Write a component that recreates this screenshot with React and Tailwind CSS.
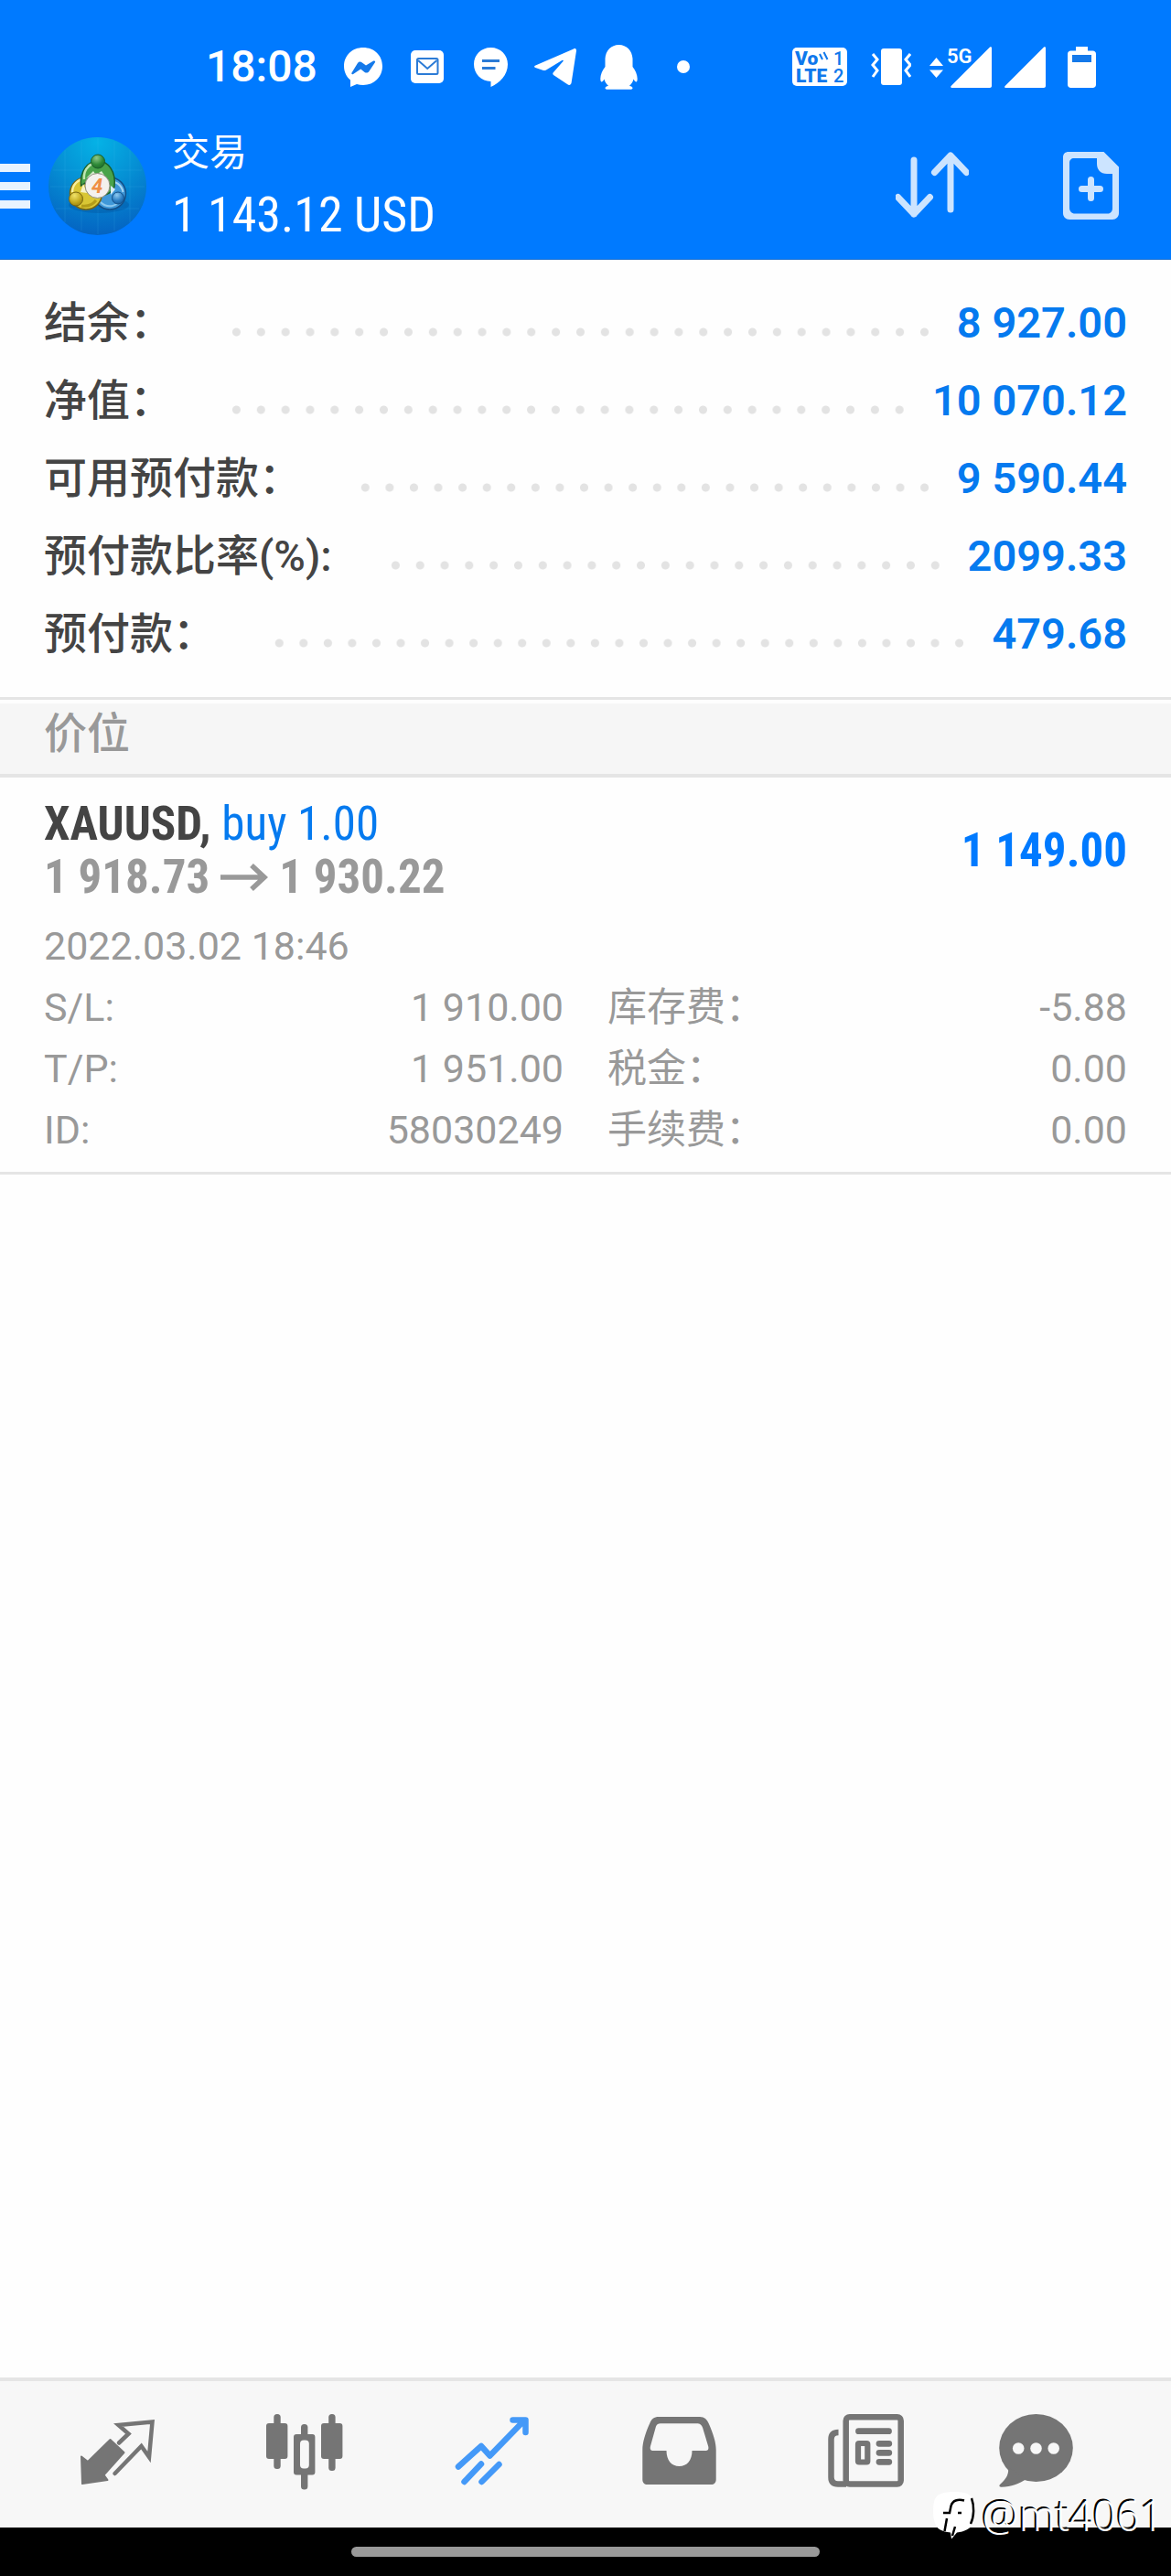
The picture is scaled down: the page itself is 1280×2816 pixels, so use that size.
const SANS = "font-['Roboto','Noto_Sans_CJK_SC',sans-serif]";
const NARROW = "font-['Roboto_Condensed','Roboto',sans-serif]";

const summary = [
  { label: '结余：', value: '8 927.00' },
  { label: '净值：', value: '10 070.12' },
  { label: '可用预付款：', value: '9 590.44' },
  { label: '预付款比率(%):', value: '2099.33' },
  { label: '预付款：', value: '479.68' },
];

const details = [
  { label: 'S/L:', value: '1 910.00' },
  { label: '库存费：', value: '-5.88' },
  { label: 'T/P:', value: '1 951.00' },
  { label: '税金：', value: '0.00' },
  { label: 'ID:', value: '58030249' },
  { label: '手续费：', value: '0.00' },
];

function MessengerIcon() {
  return (
    <svg className="h-[43px] w-[42px]" viewBox="0 0 42 43" aria-hidden="true">
      <path fill="#fff" d="M21 0C9 0 0 8.600 0 20.300c0 6.300 2.600 11.500 7 15.200V43l7-3c2.200.7 4.500 1 7 1 12 0 21-8.900 21-20.700S33 0 21 0Z" />
      <path fill="#1479ea" d="m8.500 27.500 6.300-10.300c1.200-1.800 3.100-2.200 4.700-1l4.500 3.300 8.300-4.900c1.200-.7 2.400.4 1.600 1.600l-6.500 9.700c-1.200 1.800-3.200 2.200-4.800 1l-4.300-3.300-8.200 5.400c-1.200.7-2.300-.4-1.600-1.500Z" />
    </svg>
  );
}

function MailIcon() {
  return (
    <svg className="h-9 w-9" viewBox="0 0 36 36" aria-hidden="true">
      <rect width="36" height="36" rx="5" fill="#fff" />
      <rect x="7" y="9" width="22.500" height="17" rx="1.500" fill="none" stroke="#2b7bd6" strokeWidth="2" />
      <path d="m8 11 10.200 9L28.500 11" fill="none" stroke="#2b7bd6" strokeWidth="2" />
    </svg>
  );
}

function ChatPinIcon() {
  return (
    <svg className="h-[43px] w-[37px]" viewBox="0 0 37 43" aria-hidden="true">
      <path fill="#fff" d="M18.500 0C8 0 0 8 0 18.300 0 28.500 8 37 18.500 37v6C28 39 37 30 37 18.300 37 8 29 0 18.500 0Z" />
      <path d="M9 14.500h19M9 22.500h14.500" stroke="#2b7bd6" strokeWidth="3" />
    </svg>
  );
}

function PlaneIcon() {
  return (
    <svg className="h-10 w-[46px]" viewBox="0 0 46 40" aria-hidden="true">
      <path fill="#fff" d="M1.400 18.400 43 .4c1.800-.8 3.200.2 3 2.200l-5.400 35c-.4 2.200-2.400 3-4.200 1.700L21 29c-1-.8-1-2 0-2.900l10.500-12c.8-1 0-1.900-1.200-1.200L13 23.500c-1.200.7-2.400.8-3.700.3L1.300 21c-1.700-.6-1.600-2 .1-2.600Z" />
    </svg>
  );
}

function PenguinIcon() {
  return (
    <svg className="h-[49px] w-[41px]" viewBox="0 0 41 49" aria-hidden="true">
      <path fill="#fff" d="M20.500 0C12 0 6 6.500 5.500 15v9C2.500 28 .3 32.500.3 37c0 2.500.6 3.500 1.200 3.500.9 0 2-1.200 3-3 .8 3 2.200 5.400 4.500 7.300-2 .6-3.500 1.300-3.500 2.400 0 1.200 1.200 1.600 3.500 1.600h23c2.300 0 3.500-.4 3.500-1.600 0-1.100-1.500-1.800-3.500-2.400 2.300-1.900 3.700-4.300 4.500-7.300 1 1.800 2.100 3 3 3 .6 0 1.200-1 1.200-3.500 0-4.500-2.200-9-5.200-13v-9C35 6.500 29 0 20.500 0Z" />
    </svg>
  );
}

function VolteIcon() {
  return (
    <svg className="h-[42px] w-[60px]" viewBox="0 0 60 42" role="img" aria-label="VoLTE">
      <rect width="60" height="42" rx="5" fill="#fff" />
      <g fill="#0f78ec" className={SANS}>
        <text x="3" y="19" fontSize="21" fontWeight="900">Vo</text>
        <text x="4" y="38" fontSize="21" fontWeight="900">LTE</text>
        <text x="45" y="19" fontSize="20" fontWeight="500">1</text>
        <text x="45" y="38" fontSize="20" fontWeight="500">2</text>
      </g>
      <path d="m30 7 3 6M34.500 5l4 8" stroke="#0f78ec" strokeWidth="2" />
    </svg>
  );
}

function VibrateIcon() {
  return (
    <svg className="h-10 w-11" viewBox="0 0 44 40" aria-hidden="true">
      <rect x="11" width="23" height="40" rx="3" fill="#fff" />
      <path d="m2 6 5 6-5 6 5 6-5 7M43 6l-5 6 5 6-5 6 5 7" fill="none" stroke="#fff" strokeWidth="3" />
    </svg>
  );
}

function SignalIcon() {
  return (
    <svg className="h-[45px] w-[45px]" viewBox="0 0 45 45" aria-hidden="true">
      <path fill="#fff" d="M43 .6c.8-.8 2-.4 2 .8V43c0 1.200-.8 2-2 2H1.500C.2 45-.3 43.800.6 43Z" />
    </svg>
  );
}

function Signal5GIcon() {
  return (
    <svg className="h-[45px] w-[68px] overflow-visible" viewBox="0 0 68 45" role="img" aria-label="5G">
      <path fill="#fff" d="m0 21 7.500-9L15 21ZM0 25.500h15L7.500 34ZM66 .6c.8-.8 2-.4 2 .8V43c0 1.200-.8 2-2 2H24.500c-1.300 0-1.800-1.200-.9-2Z" />
      <text x="19" y="18" fontSize="22" fontWeight="600" fill="#fff" className={SANS}>5G</text>
    </svg>
  );
}

function BatteryIcon() {
  return (
    <svg className="h-[45px] w-[31px]" viewBox="0 0 31 45" aria-hidden="true">
      <path fill="#fff" d="M9 0h13v4.500h5.500c2 0 3.500 1.500 3.500 3.500v33.500c0 2-1.500 3.500-3.500 3.500h-24C1.500 45 0 43.500 0 41.500V8c0-2 1.500-3.500 3.500-3.500H9Z" />
      <path fill="#1479ea" d="M5 9h21v8H5Z" />
    </svg>
  );
}

function Logo() {
  return (
    <svg className="h-[107px] w-[107px] shrink-0" viewBox="0 0 107 107" role="img" aria-label="MetaTrader 4">
      <defs>
        <radialGradient id="sky" cx="0.5" cy="0.05" r="1">
          <stop offset="0" stopColor="#05b2e6" />
          <stop offset="0.45" stopColor="#0590d4" />
          <stop offset="1" stopColor="#045fc0" />
        </radialGradient>
        <radialGradient id="green" cx="0.4" cy="0.25" r="0.8">
          <stop offset="0" stopColor="#8fc88a" />
          <stop offset="0.6" stopColor="#2f8a38" />
          <stop offset="1" stopColor="#1c6a28" />
        </radialGradient>
        <radialGradient id="gold" cx="0.4" cy="0.25" r="0.8">
          <stop offset="0" stopColor="#f0e26a" />
          <stop offset="0.6" stopColor="#c4ac20" />
          <stop offset="1" stopColor="#9b820f" />
        </radialGradient>
        <radialGradient id="blue" cx="0.4" cy="0.25" r="0.8">
          <stop offset="0" stopColor="#8fcaf0" />
          <stop offset="0.6" stopColor="#2c7fc4" />
          <stop offset="1" stopColor="#145a9c" />
        </radialGradient>
      </defs>
      <circle cx="53.500" cy="53.500" r="53.500" fill="url(#sky)" />
      <path d="M18 14v79M36 5v97M54 1v105M72 5v97M89 14v79M5 36h97M2 54h103M8 78h91" stroke="#4cc3ee" strokeOpacity="0.16" />
      <ellipse cx="55" cy="74" rx="33" ry="9" fill="#034a92" opacity="0.3" />
      <g strokeWidth="1.500">
        <circle cx="67" cy="61.500" r="17.500" fill="#3f98d8" stroke="#134f88" />
        <path d="M57 71c8 8 20 4 23-5" fill="none" stroke="#8cc8ee" strokeWidth="2" />
        <path d="M64 48c9-1 16 4 17.500 12" fill="none" stroke="#a5d6f3" strokeWidth="2" />
        <circle cx="41" cy="61.500" r="17.500" fill="#d9c634" stroke="#796611" />
        <path d="M26 60c0-8 6-14 13-14" fill="none" stroke="#f8ef9c" strokeWidth="2.500" />
        <path d="M36 75c6 1 12-1 16-6" fill="none" stroke="#b39c18" strokeWidth="3" />
        <path d="M35.500 53C34 37 43 26 54 26s20 11 18 28c-2 5-6 8-10 9L54 45 42 49Z" fill="#49a34a" stroke="#1b5f2a" />
        <path d="M39 46c-1-9 4-15 9-17" fill="none" stroke="#bfe6b2" strokeWidth="2.500" />
        <path d="M49 37l-8 8 10-5ZM58 37l4 6-7-4Z" fill="#d9f0d2" />
        <path d="M35 60l3-9 4 10Z" fill="#f6f2c4" />
        <path d="M73 57l-5-4v10Z" fill="#d7ecf8" />
      </g>
      <circle cx="54" cy="26.500" r="7.500" fill="url(#green)" stroke="#1b5f2a" />
      <circle cx="30" cy="67.500" r="7.500" fill="url(#gold)" stroke="#796611" />
      <circle cx="76" cy="66.500" r="6.500" fill="url(#blue)" stroke="#134f88" />
      <circle cx="53.500" cy="53" r="13.500" fill="#f4f1ee" stroke="#8f8f80" strokeWidth="1" />
      <text x="53" y="60.500" textAnchor="middle" fontSize="22" fontStyle="italic" fontWeight="700" fill="#ef8f45" className={SANS}>4</text>
    </svg>
  );
}

function SortIcon() {
  return (
    <svg className="h-[76px] w-20" viewBox="0 0 80 76" aria-hidden="true">
      <path d="M20 10v59M2.500 50.500 20 69l17.500-18.500M60 64V5M42.500 23.500 60 5l17.500 18.500" fill="none" stroke="#cce4ff" strokeWidth="7" strokeLinecap="round" strokeLinejoin="round" />
    </svg>
  );
}

function NewFileIcon() {
  return (
    <svg className="h-[74px] w-[61px]" viewBox="0 0 61 74" aria-hidden="true">
      <path fill="#cce4ff" fillRule="evenodd" d="M6 0h38.500L61 16.500V67c0 4-3 7-7 7H7c-4 0-7-3-7-7V6c0-4 2.500-6 6-6Zm6 7c-3 0-5 2-5 5v49c0 4 2.500 6.500 6 6.500h36c3 0 5-2.500 5-6V24h-6c-7 0-11-4.500-11-11V7Z" />
      <path d="M30.500 30.500v20M20.500 40.500h20" stroke="#cce4ff" strokeWidth="7" strokeLinecap="round" />
    </svg>
  );
}

function QuotesIcon() {
  return (
    <svg className="h-24 w-24" viewBox="0 0 96 96" aria-hidden="true">
      <path fill="#757575" stroke="#757575" strokeWidth="2" strokeLinejoin="round" d="M9 54.500 16 60 40.500 36 55.500 50 33.500 74.500 37.500 80 10 84Z" />
      <path d="m50 39.500 10.500-10L49.500 20l37-3.500L83 55l-8.500-12L45.500 73" fill="none" stroke="#757575" strokeWidth="4.500" strokeLinecap="round" />
    </svg>
  );
}

function CandlesIcon() {
  return (
    <svg className="h-24 w-24" viewBox="0 0 96 96" aria-hidden="true">
      <g fill="#757575">
        <rect x="14.300" y="8" width="7.400" height="60" rx="3.500" />
        <rect x="6" y="18" width="23.400" height="39" rx="3" />
        <rect x="44" y="19" width="7.400" height="71.500" rx="3.500" />
        <rect x="36" y="30" width="23.400" height="44.500" rx="3" />
        <rect x="74.200" y="8" width="7.400" height="62" rx="3.500" />
        <rect x="66" y="18" width="23.400" height="39" rx="3" />
      </g>
      <rect x="43" y="36.500" width="9.800" height="31" rx="4" fill="#f7f7f7" />
    </svg>
  );
}

function TradeIcon() {
  return (
    <svg className="h-24 w-24" viewBox="0 0 96 96" aria-hidden="true">
      <path d="M11 65.500 36 43l9.500 10.500L82 16M70.500 14.500h14V28M17.500 82 36 62.500M36.500 82 55.500 63" fill="none" stroke="#4499f8" strokeWidth="6.500" strokeLinecap="round" strokeLinejoin="round" />
    </svg>
  );
}

function InboxIcon() {
  return (
    <svg className="h-24 w-24" viewBox="0 0 96 96" aria-hidden="true">
      <path fill="#757575" fillRule="evenodd" d="M26 11h45c5 0 8 3 9.800 7.500 4.800 11 7.900 20.500 7.900 28.500v32.500c0 3.500-2 5.500-5.500 5.500H13.800c-3.500 0-5.500-2-5.500-5.500V47c0-8 3-18 8-29C18 13.500 21 11 26 11Zm2 7.300c-2.500 0-4 1-5 3.200L17 43c-.8 3 0 5 2.500 5h15c0 10.500 5.500 17 14 17s14-6.500 14-17h15c2.500 0 3.500-2 2.600-5l-6-20c-1-3-3-4.700-6-4.700Z" />
    </svg>
  );
}

function NewsIcon() {
  return (
    <svg className="h-24 w-24" viewBox="0 0 96 96" aria-hidden="true">
      <rect x="25.700" y="11.200" width="60" height="73.300" rx="4" fill="none" stroke="#757575" strokeWidth="6.500" />
      <path d="M17.500 28c-5.500 0-8 2.500-8 7.500v41.500c0 5 2.500 7.500 7.500 7.500h9" fill="none" stroke="#757575" strokeWidth="6.500" />
      <path d="M39.500 26.700h33M62 40.300h10.800M62 50.300h10.800M62 60.300h10.800" stroke="#757575" strokeWidth="6.800" strokeLinecap="round" />
      <rect x="39" y="40" width="10.300" height="20.500" rx="1" fill="none" stroke="#757575" strokeWidth="6.200" />
    </svg>
  );
}

function MessagesIcon() {
  return (
    <svg className="h-24 w-24" viewBox="0 0 96 96" aria-hidden="true">
      <ellipse cx="48.500" cy="45" rx="40.300" ry="37" fill="#757575" />
      <path fill="#757575" d="M18 66c1 7-1.500 12.500-8.500 18.500-2 2-1 3.300 1.500 3.300C21 87.500 30 84 38 79Z" />
      <g fill="#f7f7f7">
        <circle cx="29.200" cy="45.500" r="6.300" />
        <circle cx="48.500" cy="45.500" r="6.300" />
        <circle cx="67.700" cy="45.500" r="6.300" />
      </g>
    </svg>
  );
}

const tabs = [
  { label: '行情', Icon: QuotesIcon },
  { label: '图表', Icon: CandlesIcon },
  { label: '交易', Icon: TradeIcon, current: true },
  { label: '历史', Icon: InboxIcon },
  { label: '新闻', Icon: NewsIcon },
  { label: '消息', Icon: MessagesIcon, badged: true },
];

function StatusBar() {
  return (
    <div className="flex h-[135px] items-center pt-[11px] pr-[82px] pl-[225px]">
      <span className="mr-[15px] text-[48px] leading-none font-medium">18:08</span>
      <div className="grid auto-cols-[70px] grid-flow-col place-items-center">
        <MessengerIcon />
        <MailIcon />
        <ChatPinIcon />
        <PlaneIcon />
        <PenguinIcon />
        <span className="size-[14px] rounded-full bg-white" />
      </div>
      <div className="ml-auto flex items-center">
        <VolteIcon />
        <span className="ml-[26px]"><VibrateIcon /></span>
        <span className="ml-5"><Signal5GIcon /></span>
        <span className="ml-[14px]"><SignalIcon /></span>
        <span className="ml-6"><BatteryIcon /></span>
      </div>
    </div>
  );
}

export default function App() {
  return (
    <div className={`relative flex min-h-screen flex-col bg-[#fefefe] ${SANS}`}>
      <header className="border-b border-[#1a6fd0] bg-[#007aff] text-white">
        <StatusBar />
        <div className="mb-3 flex h-[136px] items-center pr-[57px]">
          <button type="button" aria-label="菜单" className="flex w-[33px] flex-col gap-[11px]">
            <span className="h-[9px] bg-[#e8f3ff]" />
            <span className="h-[9px] bg-[#e8f3ff]" />
            <span className="h-[9px] bg-[#e8f3ff]" />
          </button>
          <span className="ml-5"><Logo /></span>
          <div className="mt-1 ml-7 whitespace-nowrap">
            <h1 className="text-[41px] leading-[60px]">交易</h1>
            <p className={`text-[54px] leading-[76px] ${NARROW}`}>1 143.12 USD</p>
          </div>
          <button type="button" aria-label="排序" className="ml-auto"><SortIcon /></button>
          <button type="button" aria-label="新订单" className="ml-[103px]"><NewFileIcon /></button>
        </div>
      </header>

      <main className="flex-1">
        <dl className="px-12 pt-[26px] pb-[27px] text-[47px] leading-[85px] font-medium">
          {summary.map((row) => (
            <div key={row.label} className="flex items-center whitespace-nowrap">
              <dt className="text-[#444]">{row.label}</dt>
              <span className="mt-5 mr-[22px] ml-14 h-[10px] flex-1 bg-[radial-gradient(circle,#e3e3e3_4px,transparent_5px)] bg-repeat-round [background-size:27px_10px]" />
              <dd className="font-semibold text-[#057aef]">{row.value}</dd>
            </div>
          ))}
        </dl>

        <div className="border-t-[3px] border-[#e5e5e5] pt-1">
          <h2 className="border-b-4 border-[#e5e5e5] bg-[#f6f6f6] px-12 pb-3 text-[47px] leading-[65px] font-medium text-[#999]">价位</h2>
        </div>

        <section className="border-b-[3px] border-[#e5e5e5] px-12 pt-[22px] pb-3 text-[#999]">
          <div className={`flex items-center justify-between text-[51px] leading-[58px] font-bold whitespace-nowrap ${NARROW}`}>
            <div>
              <h3 className="text-[#444]">
                XAUUSD, <span className="font-normal text-[#057aef]">buy 1.00</span>
              </h3>
              <p className="flex items-center">
                1 918.73
                <svg className="mx-3 h-8 w-[52px]" viewBox="0 0 52 32" role="img" aria-label="至">
                  <path d="M0 16h47M34 3l14 13-14 13" fill="none" stroke="#999" strokeWidth="5.500" />
                </svg>
                1 930.22
              </p>
            </div>
            <p className="text-[#007aff]">1 149.00</p>
          </div>
          <p className="mt-[13px] text-[43px] leading-[67px]">2022.03.02 18:46</p>
          <dl className="grid grid-cols-2 gap-x-12 text-[43px] leading-[67px] whitespace-nowrap">
            {details.map((item) => (
              <div key={item.label} className="flex justify-between">
                <dt>{item.label}</dt>
                <dd>{item.value}</dd>
              </div>
            ))}
          </dl>
        </section>
      </main>

      <nav className="grid grid-cols-6 border-t-4 border-[#e5e5e5] bg-[#f7f7f7] px-[26px] pt-7 pb-9">
        {tabs.map(({ label, Icon, current, badged }) => (
          <button
            key={label}
            type="button"
            aria-label={label}
            aria-current={current ? 'page' : undefined}
            className={badged ? 'flex justify-center pr-10' : 'flex justify-center'}
          >
            <Icon />
          </button>
        ))}
      </nav>
      <div className="flex h-[53px] items-center justify-center bg-black">
        <span className="h-[11px] w-[40%] rounded-full bg-[#999]" />
      </div>

      <div className="absolute right-2 bottom-9 flex items-center gap-2 font-['Noto_Sans',sans-serif] text-[45px] leading-[60px] font-light text-white [text-shadow:-2px_-2px_0_#000]">
        <svg className="h-[52px] w-[46px]" viewBox="0 0 46 52" aria-hidden="true">
          <path fill="#fff" d="M10 1.500C17-.5 29-.5 36 1.500c6 2 8.500 7 9 14 .5 9 .5 15-2 20-2.500 5-9 8-17 9l-6 7-1-7C10 43.500 4 41 2 34-.5 27-.5 18 1 11c1-5 4-8 9-9.500Z" />
          <path d="M34 9.500c-7-2-13 0-14.500 6L18 23h-7M27 23h4M15 29l-2.500 14M24 38l-3 10M42 7c3 8 3 20-1 28" fill="none" stroke="#000" strokeWidth="2.500" />
        </svg>
        <span>@mt4061</span>
      </div>
    </div>
  );
}
